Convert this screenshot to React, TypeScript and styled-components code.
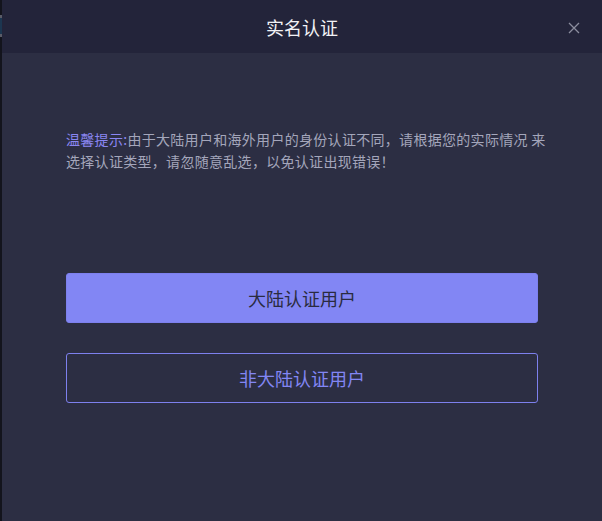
import styled, { createGlobalStyle } from 'styled-components';

const GlobalStyle = createGlobalStyle`
  html, body {
    margin: 0;
    padding: 0;
    background: #13141d;
  }
  body {
    font-family: "Noto Sans CJK SC", "Noto Sans", sans-serif;
  }
`;

const Page = styled.div`
  display: flex;
  width: 602px;
  height: 521px;
  overflow: hidden;
`;

const Backdrop = styled.div`
  width: 2px;
  flex: none;
  background: #13141d;
  display: flex;
  flex-direction: column;
  padding-top: 15px;
`;

const BackdropMark = styled.div<{ $color: string; $h: number }>`
  height: ${(p) => p.$h}px;
  background: ${(p) => p.$color};
`;

const Modal = styled.div`
  flex: 1;
  min-width: 0;
  display: flex;
  flex-direction: column;
  background: #2c2e43;
`;

const Header = styled.div`
  height: 53px;
  flex: none;
  display: flex;
  align-items: center;
  justify-content: center;
  position: relative;
  background: #23243a;
`;

const Title = styled.div`
  color: #f2f2f5;
  font-size: 18px;
  line-height: 24px;
`;

const CloseButton = styled.button`
  position: absolute;
  right: 22px;
  top: 22px;
  width: 12px;
  height: 12px;
  padding: 0;
  border: none;
  background: none;
  display: flex;
  cursor: pointer;
`;

const Body = styled.div`
  padding: 76px 64px 0 64px;
  display: flex;
  flex-direction: column;
`;

const Tip = styled.p`
  margin: 0;
  font-size: 14px;
  line-height: 21.5px;
  letter-spacing: 0.3px;
  white-space: nowrap;
  color: #a4a6bb;
`;

const TipLabel = styled.span`
  color: #8a86f2;
`;

const Actions = styled.div`
  margin-top: 101px;
  display: flex;
  flex-direction: column;
  gap: 30px;
`;

const ChoiceButton = styled.button<{ $primary?: boolean }>`
  height: 50px;
  border-radius: 3px;
  font-family: inherit;
  font-size: 18px;
  cursor: pointer;
  border: 1px solid #7d80ee;
  background: ${(p) => (p.$primary ? '#8286f4' : 'transparent')};
  color: ${(p) => (p.$primary ? '#2a2b40' : '#8286f4')};
`;

export default function App() {
  return (
    <>
      <GlobalStyle />
      <Page>
        <Backdrop>
          <BackdropMark $color="#5a5c68" $h={3} />
          <BackdropMark $color="#1c3650" $h={16} />
          <BackdropMark $color="#5a5c68" $h={3} />
        </Backdrop>
        <Modal>
          <Header>
            <Title>实名认证</Title>
            <CloseButton aria-label="关闭">
              <svg width="12" height="12" viewBox="0 0 12 12">
                <path
                  d="M1 1 L11 11 M11 1 L1 11"
                  stroke="#8b8d9e"
                  strokeWidth="1.3"
                  fill="none"
                />
              </svg>
            </CloseButton>
          </Header>
          <Body>
            <Tip>
              <TipLabel>温馨提示:</TipLabel>
              由于大陆用户和海外用户的身份认证不同，请根据您的实际情况 来
              <br />
              选择认证类型，请忽随意乱选，以免认证出现错误！
            </Tip>
            <Actions>
              <ChoiceButton $primary>大陆认证用户</ChoiceButton>
              <ChoiceButton>非大陆认证用户</ChoiceButton>
            </Actions>
          </Body>
        </Modal>
      </Page>
    </>
  );
}
